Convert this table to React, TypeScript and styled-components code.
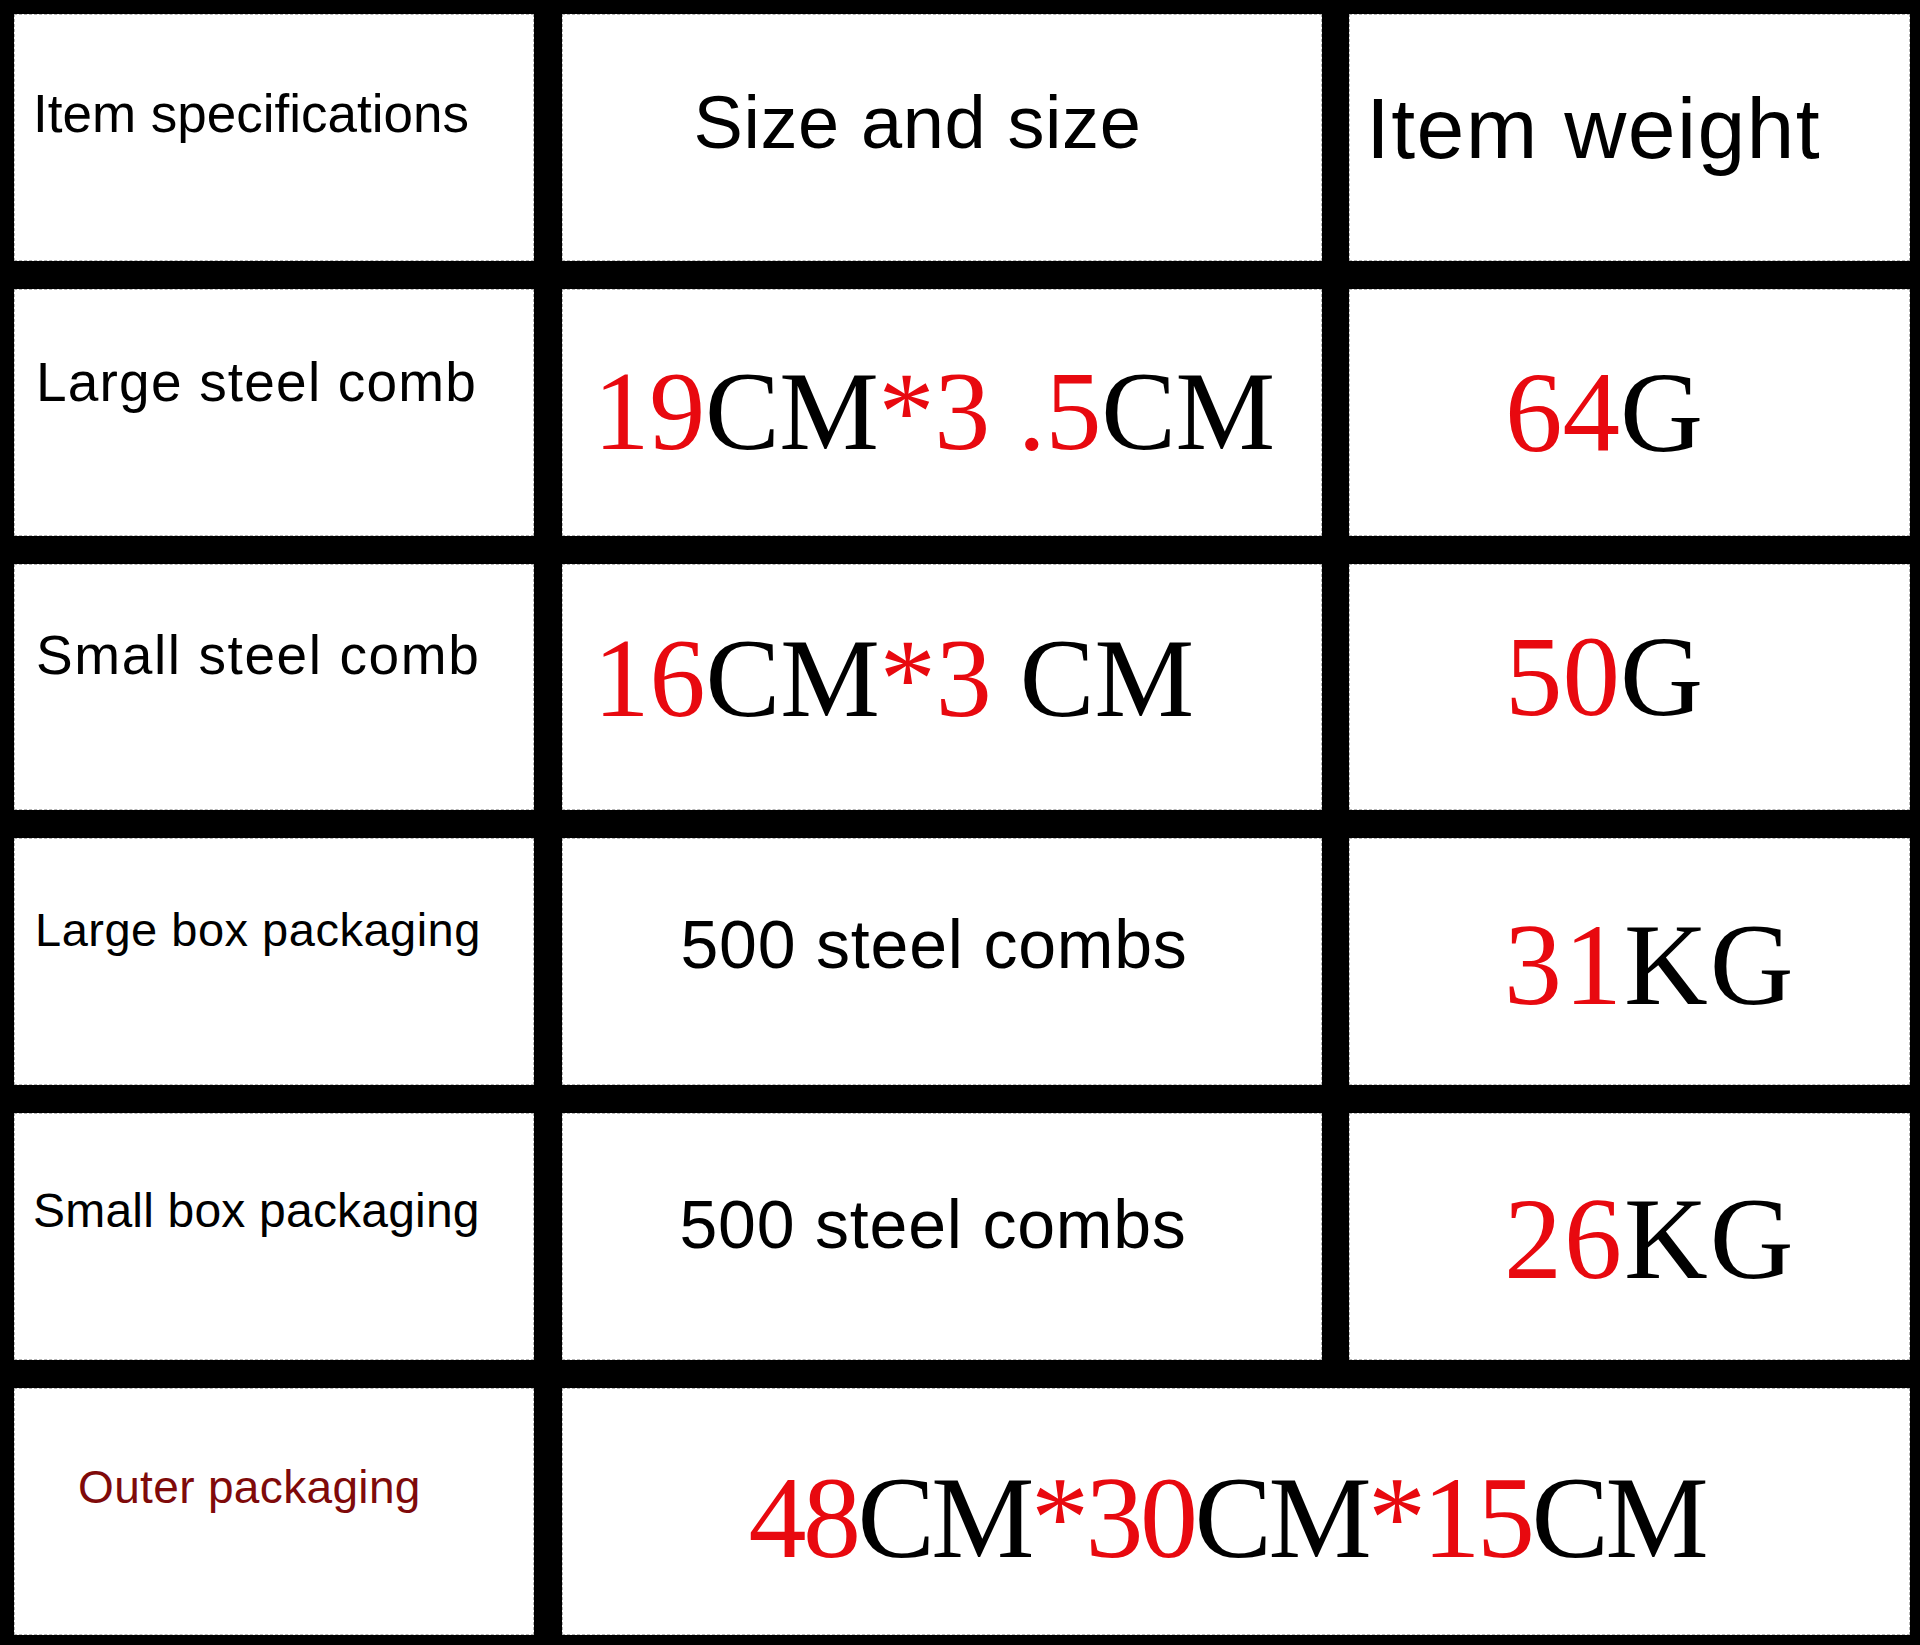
import styled, { createGlobalStyle } from 'styled-components'

const GlobalStyle = createGlobalStyle`
  html, body {
    margin: 0;
    padding: 0;
    background: #000;
  }
`

type Part = { text: string; red?: boolean }

type CellSpec = {
  serif?: boolean
  parts: Part[]
  size: number
  top: number
  left: number
  spacing?: number
  color?: string
  span?: number
}

const rows: CellSpec[][] = [
  [
    { parts: [{ text: 'Item specifications' }], size: 53, top: 72, left: 18 },
    { parts: [{ text: 'Size and size' }], size: 74, top: 71, left: 131, spacing: 0.6 },
    { parts: [{ text: 'Item weight' }], size: 86, top: 70, left: 16, spacing: 1.4 },
  ],
  [
    { parts: [{ text: 'Large steel comb' }], size: 55, top: 65, left: 21, spacing: 1.2 },
    {
      serif: true,
      parts: [{ text: '19', red: true }, { text: 'CM' }, { text: '*3 .5', red: true }, { text: 'CM' }],
      size: 112, top: 65, left: 31, spacing: -0.3,
    },
    { serif: true, parts: [{ text: '64', red: true }, { text: 'G' }], size: 115, top: 65, left: 155 },
  ],
  [
    { parts: [{ text: 'Small steel comb' }], size: 55, top: 63, left: 21, spacing: 1.6 },
    {
      serif: true,
      parts: [{ text: '16', red: true }, { text: 'CM' }, { text: '*3', red: true }, { text: ' CM' }],
      size: 112, top: 57, left: 31,
    },
    { serif: true, parts: [{ text: '50', red: true }, { text: 'G' }], size: 115, top: 54, left: 155 },
  ],
  [
    { parts: [{ text: 'Large box packaging' }], size: 47, top: 67, left: 20, spacing: 0.5 },
    { parts: [{ text: '500 steel combs' }], size: 68, top: 71, left: 118, spacing: 0.8 },
    { serif: true, parts: [{ text: '31', red: true }, { text: 'KG' }], size: 116, top: 68, left: 154, spacing: 2 },
  ],
  [
    { parts: [{ text: 'Small box packaging' }], size: 48, top: 73, left: 18, spacing: 0.2 },
    { parts: [{ text: '500 steel combs' }], size: 68, top: 76, left: 117, spacing: 0.8 },
    { serif: true, parts: [{ text: '26', red: true }, { text: 'KG' }], size: 116, top: 67, left: 154, spacing: 2 },
  ],
  [
    { parts: [{ text: 'Outer packaging' }], size: 46, top: 75, left: 63, spacing: 0.35, color: '#7f0a0a' },
    {
      serif: true,
      span: 2,
      parts: [
        { text: '48', red: true },
        { text: 'CM' },
        { text: '*30', red: true },
        { text: 'CM' },
        { text: '*15', red: true },
        { text: 'CM' },
      ],
      size: 116, top: 71, left: 186, spacing: -3.5,
    },
  ],
]

export default function App() {
  return (
    <>
      <GlobalStyle />
      <Table>
        {rows.map((row, r) =>
          row.map((cell, c) => (
            <Cell key={`${r}-${c}`} $span={cell.span ?? 1}>
              <Label
                $serif={!!cell.serif}
                $size={cell.size}
                $top={cell.top}
                $left={cell.left}
                $spacing={cell.spacing ?? 0}
                $color={cell.color ?? '#000'}
              >
                {cell.parts.map((p, i) =>
                  p.red ? <Red key={i}>{p.text}</Red> : <span key={i}>{p.text}</span>
                )}
              </Label>
            </Cell>
          ))
        )}
      </Table>
    </>
  )
}

const Red = styled.span`
  color: #e8090f;
`

const Label = styled.div<{
  $serif: boolean
  $size: number
  $top: number
  $left: number
  $spacing: number
  $color: string
}>`
  padding-top: ${(p) => p.$top}px;
  padding-left: ${(p) => p.$left}px;
  font-family: ${(p) =>
    p.$serif
      ? `'Liberation Serif', 'Times New Roman', serif`
      : `'Liberation Sans', Arial, sans-serif`};
  font-size: ${(p) => p.$size}px;
  letter-spacing: ${(p) => p.$spacing}px;
  line-height: 1;
  color: ${(p) => p.$color};
  white-space: pre;
`

const Cell = styled.div<{ $span: number }>`
  grid-column: span ${(p) => p.$span};
  box-sizing: border-box;
  background: #fff;
  border: 1px dashed #b5b5b5;
  overflow: hidden;
`

const Table = styled.main`
  box-sizing: border-box;
  width: 1920px;
  height: 1645px;
  padding: 14px 10px 10px 14px;
  background: #000;
  display: grid;
  grid-template-columns: 520px 760px 1fr;
  grid-template-rows: repeat(6, 1fr);
  column-gap: 27.5px;
  row-gap: 28px;
`
